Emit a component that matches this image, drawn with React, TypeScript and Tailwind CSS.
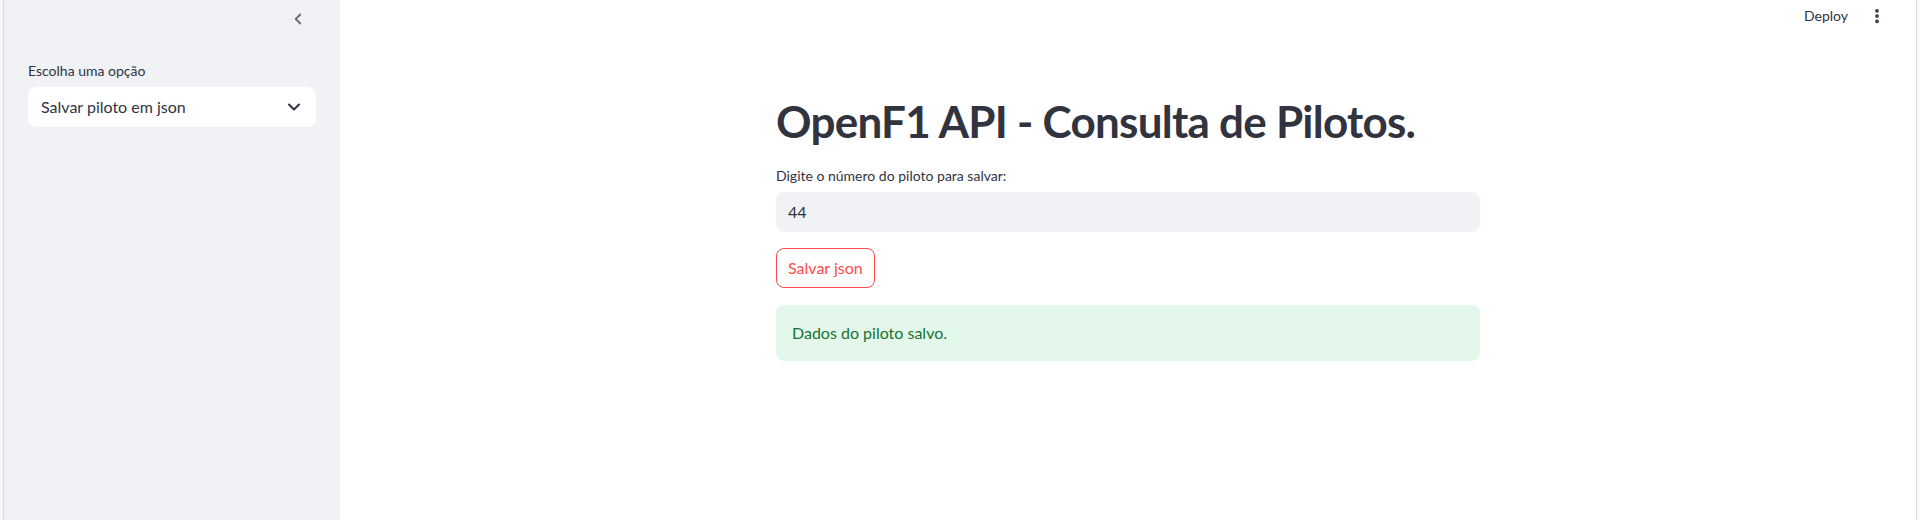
import { ChevronDown, ChevronLeft, EllipsisVertical } from 'lucide-react';

const font = { fontFamily: 'Lato, "Noto Sans", sans-serif' };

export default function App() {
  return (
    <div className="flex h-[520px] w-full bg-white text-[#31333f]" style={font}>
      {/* window frame left */}
      <div className="w-[4px] shrink-0 border-r border-[#dcdcdc] bg-[#f7f7f7]" />

      {/* Sidebar */}
      <aside className="flex w-[336px] shrink-0 flex-col bg-[#f0f2f6] px-6">
        <div className="flex h-[28px] items-end justify-end pr-[9px]">
          <ChevronLeft className="h-[18px] w-[18px] text-[#6b6e7a]" strokeWidth={2.5} />
        </div>
        <label className="mt-[33px] text-sm leading-5">Escolha uma opção</label>
        <div className="mt-[6px] flex h-[40px] items-center justify-between rounded-lg bg-white pl-[13px] pr-[12px]">
          <span className="text-base">Salvar piloto em json</span>
          <ChevronDown className="h-5 w-5 text-[#31333f]" strokeWidth={2.5} />
        </div>
      </aside>

      {/* Main */}
      <main className="flex min-w-0 flex-1 flex-col">
        <header className="flex h-[32px] items-center justify-end gap-[20px] pr-[30px]">
          <span className="text-sm">Deploy</span>
          <EllipsisVertical className="h-[18px] w-[18px]" strokeWidth={3} />
        </header>

        <div className="mx-auto flex w-[704px] flex-col pt-[63px]">
          <h1 className="text-[44px] font-bold leading-[1.2] tracking-[-0.75px]">OpenF1 API - Consulta de Pilotos.</h1>

          <label className="mt-[18px] text-sm leading-5">Digite o número do piloto para salvar:</label>
          <div className="mt-[6px] flex h-[40px] items-center rounded-lg bg-[#f0f2f6] px-[12px] text-base">44</div>

          <button className="mt-[16px] h-[40px] w-fit rounded-lg border border-[#ff4b4b] bg-white px-[11px] text-base text-[#ff4b4b]">
            Salvar json
          </button>

          <div className="mt-[17px] flex h-[56px] items-center rounded-lg bg-[#e3f7ea] px-4 text-base text-[#177233]">
            Dados do piloto salvo.
          </div>
        </div>
      </main>

      {/* window frame right */}
      <div className="w-[4px] shrink-0 border-l border-[#dcdcdc] bg-[#fafafa]" />
    </div>
  );
}
